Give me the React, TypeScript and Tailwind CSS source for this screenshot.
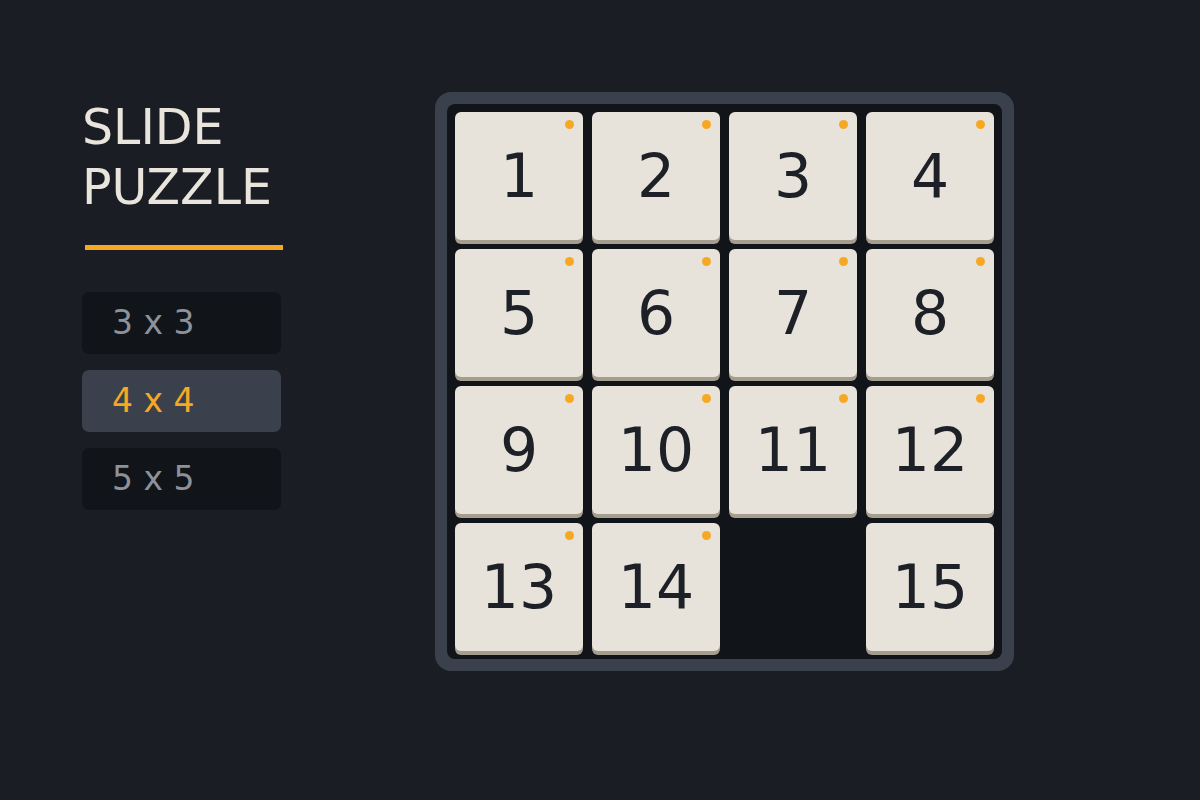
import React from "react";

const FONT = { fontFamily: '"DejaVu Sans", "Noto Sans", sans-serif' };

// Board layout: 0 marks the empty slot
const cells = [1, 2, 3, 4, 5, 6, 7, 8, 9, 10, 11, 12, 13, 14, 0, 15];

function Tile({ value, index }: { value: number; index: number }) {
  if (value === 0) return <div className="h-[128px]" />;
  const inPlace = value === index + 1;
  return (
    <div className="relative h-[128px] rounded-[6px] bg-[#e7e3da] shadow-[0_4px_0_#a59e8f] flex items-center justify-center">
      <span className="text-[60px] leading-none text-[#1d2026] -mt-[1px]">{value}</span>
      {inPlace && (
        <span className="absolute top-[8px] right-[9px] w-[9px] h-[9px] rounded-full bg-[#f7a823]" />
      )}
    </div>
  );
}

export default function App() {
  const sizes = ["3 x 3", "4 x 4", "5 x 5"];
  return (
    <div style={FONT} className="w-[1200px] h-[800px] bg-[#1a1d23] flex items-start pl-[82px] pt-[92px]">
      <div className="w-[199px] mt-[6px] flex flex-col">
        <h1 className="text-[49px] leading-[60px] text-[#e9e5dc] font-normal">
          SLIDE
          <br />
          PUZZLE
        </h1>
        <div className="mt-[27px] ml-[3px] h-[5px] w-[198px] bg-[#f7a823]" />
        <div className="mt-[42px] flex flex-col gap-[16px]">
          {sizes.map((s) => {
            const active = s === "4 x 4";
            return (
              <button
                key={s}
                className={
                  "h-[62px] w-[199px] rounded-[7px] text-left pl-[30px] text-[33px] " +
                  (active ? "bg-[#3b414c] text-[#f7a823]" : "bg-[#111419] text-[#8c919a]")
                }
              >
                {s}
              </button>
            );
          })}
        </div>
      </div>
      <div className="ml-[154px] rounded-[16px] bg-[#3b414c] p-[12px]">
        <div className="w-[555px] rounded-[8px] bg-[#111419] p-[8px] grid grid-cols-4 gap-[9px]">
          {cells.map((v, i) => (
            <Tile key={i} value={v} index={i} />
          ))}
        </div>
      </div>
    </div>
  );
}
